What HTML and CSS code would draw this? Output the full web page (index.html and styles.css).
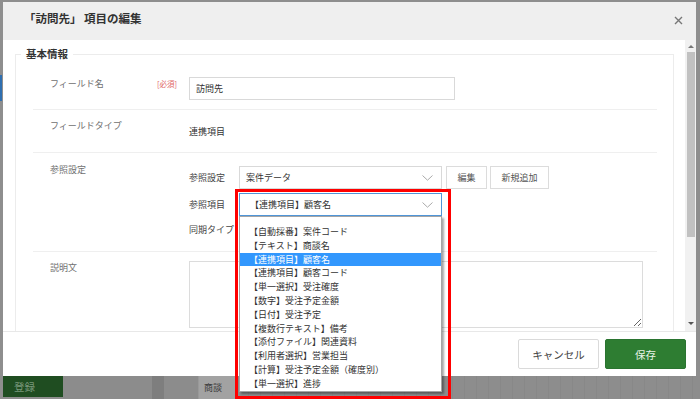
FILE: index.html
```html
<!DOCTYPE html>
<html lang="ja">
<head>
<meta charset="UTF-8">
<title>項目の編集</title>
<link rel="stylesheet" href="styles.css">
</head>
<body>

<div class="screen">
  <div class="modal">
    <div class="modal-header">
      <h1 class="modal-title">「訪問先」 項目の編集</h1>
      <span class="close-btn">
        <svg width="9" height="9" viewBox="0 0 9 9"><path d="M1 1L8 8M8 1L1 8" stroke="#777" stroke-width="1.4" fill="none"/></svg>
      </span>
    </div>

    <div class="modal-body">
      <div class="scroll-area">
        <fieldset class="group">
          <legend>基本情報</legend>

          <div class="form-row row-name">
            <div class="row-label">フィールド名<span class="required">[必須]</span></div>
            <div class="row-value"><input class="text-input" type="text" value="訪問先"></div>
          </div>

          <div class="form-row row-type">
            <div class="row-label">フィールドタイプ</div>
            <div class="row-value type-value">連携項目</div>
          </div>

          <div class="form-row row-ref">
            <div class="row-label">参照設定</div>
            <div class="row-value ref-grid">
              <div class="ref-line">
                <span class="sub-label">参照設定</span>
                <div class="select-box">案件データ
                  <svg class="chevron" width="11" height="6" viewBox="0 0 11 6"><path d="M0.5 0.5L5.5 5.2L10.5 0.5" stroke="#aaa" fill="none"/></svg>
                </div>
                <button class="small-btn btn-edit">編集</button>
                <button class="small-btn btn-new">新規追加</button>
              </div>
              <div class="ref-line">
                <span class="sub-label">参照項目</span>
                <div class="select-box focused">【連携項目】顧客名
                  <svg class="chevron" width="11" height="6" viewBox="0 0 11 6"><path d="M0.5 0.5L5.5 5.2L10.5 0.5" stroke="#aaa" fill="none"/></svg>
                </div>
              </div>
              <div class="ref-line sync-line">
                <span class="sub-label">同期タイプ</span>
              </div>
            </div>
          </div>

          <div class="form-row row-desc">
            <div class="row-label">説明文</div>
            <div class="row-value"><textarea class="desc-input"></textarea></div>
          </div>
        </fieldset>
      </div>

      <div class="scrollbar">
        <span class="arrow-up"></span>
        <span class="thumb"></span>
        <span class="arrow-down"></span>
      </div>
    </div>

    <div class="modal-footer">
      <button class="btn btn-cancel">キャンセル</button>
      <button class="btn btn-save">保存</button>
    </div>
  </div>

  <div class="backdrop-bar">
    <div class="reg-btn">登録</div>
    <div class="bar-gap"></div>
    <div class="bar-band"></div>
    <div class="bar-gap2"></div>
    <div class="bar-tab">商談</div>
    <div class="bar-grid"></div>
  </div>

  <!-- open list of 参照項目, drawn over the modal -->
  <ul class="dropdown">
    <li>【自動採番】案件コード</li>
    <li>【テキスト】商談名</li>
    <li class="selected">【連携項目】顧客名</li>
    <li>【連携項目】顧客コード</li>
    <li>【単一選択】受注確度</li>
    <li>【数字】受注予定金額</li>
    <li>【日付】受注予定</li>
    <li>【複数行テキスト】備考</li>
    <li>【添付ファイル】関連資料</li>
    <li>【利用者選択】営業担当</li>
    <li>【計算】受注予定金額（確度別）</li>
    <li>【単一選択】進捗</li>
  </ul>

  <div class="highlight-box"></div>
</div>

</body>
</html>
```

FILE: styles.css
```css
* {
  box-sizing: border-box;
}
body {
  margin: 0;
  background: #8c8c8c;
  font-family: "Noto Sans CJK JP", "Noto Sans", sans-serif;
  overflow: hidden;
}
.screen {
  position: relative;
  width: 700px;
  height: 399px;
  overflow: hidden;
  padding: 2px 4px 0 3px;
  background: linear-gradient(#2f6fb0, #2f6fb0) 0 75px / 2px 26px no-repeat, #8e8e8e;
}

/* modal */
.modal {
  width: 693px;
  height: 374px;
  background: #fff;
  display: flex;
  flex-direction: column;
}
.modal-header {
  height: 38px;
  flex-shrink: 0;
  background: #efefef;
  display: flex;
  justify-content: space-between;
  align-items: flex-start;
  padding: 8px 13px 0 21px;
}
.modal-title {
  margin: 0;
  font-size: 11.5px;
  line-height: 17px;
  font-weight: bold;
  color: #333;
}
.close-btn {
  margin-top: 6px;
  display: flex;
}

.modal-body {
  flex: 1;
  display: flex;
  min-height: 0;
}
.scroll-area {
  flex: 1;
  overflow: hidden;
  padding: 7px 11px 0 12px;
}
.group {
  margin: 0;
  padding: 0 0 40px;
  border: 1px solid #ececec;
  min-width: 0;
}
.group legend {
  margin-left: 5px;
  padding: 0 5px;
  font-size: 10.5px;
  line-height: 14px;
  font-weight: bold;
  color: #333;
}

.form-row {
  display: flex;
  margin: 0 16px 0 17px;
  border-bottom: 1px solid #efefef;
  font-size: 9px;
  line-height: 13px;
}
.row-label {
  width: 156px;
  flex-shrink: 0;
  padding-left: 17px;
  display: flex;
  align-items: flex-start;
  color: #707070;
}
.required {
  margin-left: auto;
  margin-right: 12px;
  font-size: 7.5px;
  color: #e06666;
}
.row-value {
  color: #333;
}

.row-name { padding: 16px 0 9px; }
.text-input {
  width: 266px;
  height: 23px;
  border: 1px solid #d9d9d9;
  padding: 0 6px;
  font: 9px "Noto Sans CJK JP", sans-serif;
  color: #333;
}

.row-type { padding: 9px 0 14px; }
.type-value { margin-top: 6px; }

.row-ref { padding: 10px 0 13px; }
.ref-grid { margin-top: 3px; }
.ref-line {
  display: flex;
  align-items: center;
  gap: 4px;
  margin-bottom: 4px;
}
.sub-label {
  width: 46px;
  color: #444;
}
.sync-line {
  height: 18px;
  margin-bottom: 0;
}
.select-box {
  position: relative;
  width: 203px;
  height: 23px;
  border: 1px solid #d9d9d9;
  padding-left: 6px;
  display: flex;
  align-items: center;
  color: #333;
}
.select-box.focused {
  border-color: #4f95d8;
  padding-left: 10px;
}
.chevron {
  position: absolute;
  right: 8px;
  top: 8px;
}
.small-btn {
  height: 23px;
  border: 1px solid #dcdcdc;
  background: #fff;
  color: #555;
  font: 9px "Noto Sans CJK JP", sans-serif;
  padding: 0;
}
.btn-edit { width: 41px; }
.btn-new { width: 59px; margin-left: -1px; }

.dropdown {
  position: absolute;
  left: 239px;
  top: 216px;
  z-index: 5;
  width: 203px;
  height: 176px;
  margin: 0;
  padding: 8px 0 0;
  list-style: none;
  background: #fff;
  border: 1px solid #a5a5a5;
  box-shadow: 2px 2px 2px rgba(0, 0, 0, 0.35);
  font-size: 9px;
}
.dropdown li {
  height: 13.8px;
  line-height: 13.8px;
  padding-left: 9px;
  color: #333;
  white-space: nowrap;
}
.dropdown li.selected {
  background: #3297fd;
  color: #fff;
}

.row-desc {
  padding-top: 9px;
  border-bottom: none;
}
.desc-input {
  display: block;
  width: 454px;
  height: 67px;
  border: 1px solid #dcdcdc;
  resize: both;
}

/* scrollbar */
.scrollbar {
  width: 11px;
  flex-shrink: 0;
  background: #f1f1f1;
  display: flex;
  flex-direction: column;
  align-items: center;
  padding: 5px 0 6px;
}
.arrow-up {
  border: 3px solid transparent;
  border-top: none;
  border-bottom: 3px solid #777;
}
.thumb {
  width: 8px;
  height: 185px;
  margin-top: 4px;
  background: #c1c1c1;
}
.arrow-down {
  margin-top: auto;
  border: 3px solid transparent;
  border-bottom: none;
  border-top: 3px solid #555;
}

/* footer */
.modal-footer {
  height: 45px;
  flex-shrink: 0;
  border-top: 1px solid #e8e8e8;
  display: flex;
  justify-content: flex-end;
  gap: 6px;
  padding: 7px 10px 0 0;
}
.btn {
  width: 81px;
  height: 30px;
  font: 10.5px "Noto Sans CJK JP", sans-serif;
  border-radius: 2px;
}
.btn-cancel {
  background: #fff;
  border: 1px solid #dadada;
  color: #444;
}
.btn-save {
  background: #2e7d32;
  border: 1px solid #2a7430;
  color: #e8f3e8;
}

/* page behind the overlay */
.backdrop-bar {
  display: flex;
  height: 23px;
  margin-right: -4px;
}
.reg-btn {
  width: 60px;
  height: 21px;
  background: #1f4d21;
  color: #7a977b;
  font-size: 10.5px;
  line-height: 21px;
  padding-left: 11px;
}
.bar-gap {
  width: 89px;
  background: #8c8c8c;
}
.bar-band {
  width: 12px;
  background: #7e7e7e;
}
.bar-gap2 {
  width: 34px;
  background: #8c8c8c;
}
.bar-tab {
  width: 38px;
  background: #a2a2a2;
  border-left: 1px solid #999;
  color: #3c3c3c;
  font-size: 9px;
  line-height: 23px;
  padding-left: 5px;
}
.bar-grid {
  flex: 1;
  background: repeating-linear-gradient(90deg, #888 0 1px, #8d8d8d 1px 12px);
}

.highlight-box {
  position: absolute;
  left: 235px;
  top: 189px;
  width: 216px;
  height: 210px;
  border: 3px solid #f00;
  z-index: 10;
}
```
